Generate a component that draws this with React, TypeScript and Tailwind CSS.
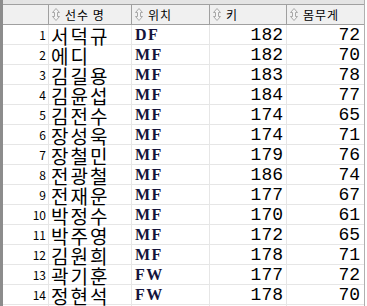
const rows: [number, string, string, number, number][] = [
  [1, "서덕규", "DF", 182, 72],
  [2, "에디", "MF", 182, 70],
  [3, "김길용", "MF", 183, 78],
  [4, "김윤섭", "MF", 184, 77],
  [5, "김전수", "MF", 174, 65],
  [6, "장성욱", "MF", 174, 71],
  [7, "장철민", "MF", 179, 76],
  [8, "전광철", "MF", 186, 74],
  [9, "전재운", "MF", 177, 67],
  [10, "박정수", "MF", 170, 61],
  [11, "박주영", "MF", 172, 65],
  [12, "김원희", "MF", 178, 71],
  [13, "곽기훈", "FW", 177, 72],
  [14, "정현석", "FW", 178, 70],
  [15, "한동원", "FW", 175, 68],
];

const SortIcon = () => (
  <svg width="8" height="13" viewBox="0 0 8 13" className="shrink-0">
    <path
      d="M4 0.5 L7.5 4.5 L5.5 4.5 L5.5 8.5 L7.5 8.5 L4 12.5 L0.5 8.5 L2.5 8.5 L2.5 4.5 L0.5 4.5 Z"
      fill="#f4f4f4"
      stroke="#a8a8a8"
      strokeWidth="1"
    />
  </svg>
);

const HeaderCell = ({label}: {label: string}) => (
  <div className="flex items-center gap-[5px] pl-[3px] border-l border-[#a0a0a0] h-full">
    <SortIcon />
    <span className="text-[12px] text-black tracking-[1px]">{label}</span>
  </div>
);

const App = () => {
  return (
    <div
      className="w-[367px] h-[306px] overflow-hidden bg-white flex"
      style={{fontFamily: '"Noto Sans CJK KR", "Noto Sans", sans-serif'}}
    >
      <div className="w-[3px] bg-[#8c8c8c] shrink-0" />
      <div className="flex flex-col w-[362px] shrink-0 border-r border-[#b0b0b0]">
        <div className="h-[5px] bg-[#e4e4e4] border-b border-[#a0a0a0] shrink-0" />
        <div className="grid grid-cols-[45px_83px_78px_77px_78px] h-[20px] bg-[#f0f0f0] border-b border-[#a0a0a0] shrink-0">
          <div />
          <HeaderCell label="선수 명" />
          <HeaderCell label="위치" />
          <HeaderCell label="키" />
          <HeaderCell label="몸무게" />
        </div>
        {rows.map(([no, name, pos, height, weight]) => (
          <div
            key={no}
            className="grid grid-cols-[45px_83px_78px_77px_78px] h-[20px] border-b border-[#e6e6e6] shrink-0"
          >
            <div className="flex items-center justify-end pr-[2px] text-[12px] leading-none text-black">
              {no}
            </div>
            <div className="flex items-center pl-[2px] pt-[1px] border-l border-[#e6e6e6] text-[19px] leading-none tracking-[2px] text-black whitespace-nowrap">
              {name}
            </div>
            <div
              className="flex items-center pl-[3px] border-l border-[#e6e6e6] text-[16px] leading-none font-bold tracking-[1.5px] text-[#14143c]"
              style={{fontFamily: '"Liberation Serif", serif'}}
            >
              {pos}
            </div>
            <div
              className="flex items-center justify-end pr-[3px] border-l border-[#e6e6e6] text-[18px] leading-none text-black"
              style={{fontFamily: '"Liberation Mono", monospace'}}
            >
              {height}
            </div>
            <div
              className="flex items-center justify-end pr-[4px] border-l border-[#e6e6e6] text-[18px] leading-none text-black"
              style={{fontFamily: '"Liberation Mono", monospace'}}
            >
              {weight}
            </div>
          </div>
        ))}
      </div>
    </div>
  );
};

export default App;
